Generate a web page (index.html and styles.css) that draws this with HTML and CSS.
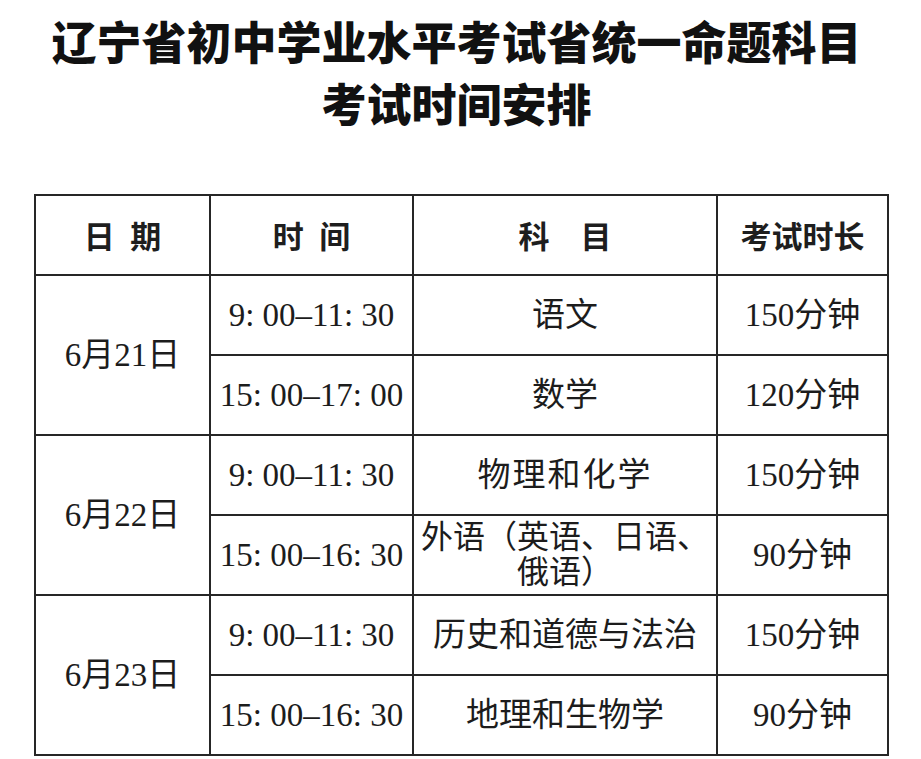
FILE: index.html
```html
<!DOCTYPE html>
<html lang="zh-CN">
<head>
<meta charset="utf-8">
<title>辽宁省初中学业水平考试省统一命题科目考试时间安排</title>
<link rel="stylesheet" href="styles.css">
</head>
<body>
<div class="page">
  <h1 class="title">
    <span class="title-line">辽宁省初中学业水平考试省统一命题科目</span>
    <span class="title-line">考试时间安排</span>
  </h1>
  <table class="schedule">
    <colgroup>
      <col class="c-date">
      <col class="c-time">
      <col class="c-subject">
      <col class="c-dur">
    </colgroup>
    <thead>
      <tr>
        <th>日&ensp;期</th>
        <th>时&ensp;间</th>
        <th>科　目</th>
        <th>考试时长</th>
      </tr>
    </thead>
    <tbody>
      <tr>
        <td rowspan="2">6月21日</td>
        <td>9: 00–11: 30</td>
        <td>语文</td>
        <td>150分钟</td>
      </tr>
      <tr>
        <td>15: 00–17: 00</td>
        <td>数学</td>
        <td>120分钟</td>
      </tr>
      <tr>
        <td rowspan="2">6月22日</td>
        <td>9: 00–11: 30</td>
        <td class="wide">物理和化学</td>
        <td>150分钟</td>
      </tr>
      <tr>
        <td>15: 00–16: 30</td>
        <td class="wrap">外语（英语、日语、俄语）</td>
        <td>90分钟</td>
      </tr>
      <tr>
        <td rowspan="2">6月23日</td>
        <td>9: 00–11: 30</td>
        <td>历史和道德与法治</td>
        <td>150分钟</td>
      </tr>
      <tr>
        <td>15: 00–16: 30</td>
        <td>地理和生物学</td>
        <td>90分钟</td>
      </tr>
    </tbody>
  </table>
</div>
</body>
</html>
```

FILE: styles.css
```css
html, body {
  margin: 0;
  padding: 0;
  background: #ffffff;
}

.page {
  width: 921px;
  height: 759px;
  overflow: hidden;
  color: #1c1c1c;
}

.title {
  margin: 0;
  padding-top: 10px;
  font-family: "Noto Sans CJK SC", sans-serif;
  font-weight: 900;
  font-size: 45px;
  line-height: 62px;
  text-align: center;
  color: #111111;
  padding-right: 8px;
}

.title-line {
  display: block;
}

.schedule {
  margin-top: 60px;
  margin-left: 34px;
  border-collapse: collapse;
  table-layout: fixed;
  width: 853px;
}

.c-date { width: 175px; }
.c-time { width: 203px; }
.c-subject { width: 304px; }
.c-dur { width: 171px; }

.schedule th,
.schedule td {
  border: 2px solid #262626;
  height: 80px;
  padding: 0;
  text-align: center;
  vertical-align: middle;
  box-sizing: border-box;
}

.schedule tr {
  height: 80px;
}

.schedule th {
  font-family: "Noto Sans CJK SC", sans-serif;
  font-weight: 700;
  font-size: 31px;
  line-height: 36px;
  color: #1e1e1e;
}

.schedule td {
  font-family: "Liberation Serif", "Noto Sans CJK SC", serif;
  font-weight: 400;
  font-size: 33px;
  line-height: 36px;
  color: #1c1c1c;
}

.schedule td.wide {
  letter-spacing: 2px;
}

.schedule td.wrap {
  font-size: 32px;
  line-height: 35px;
}
```
